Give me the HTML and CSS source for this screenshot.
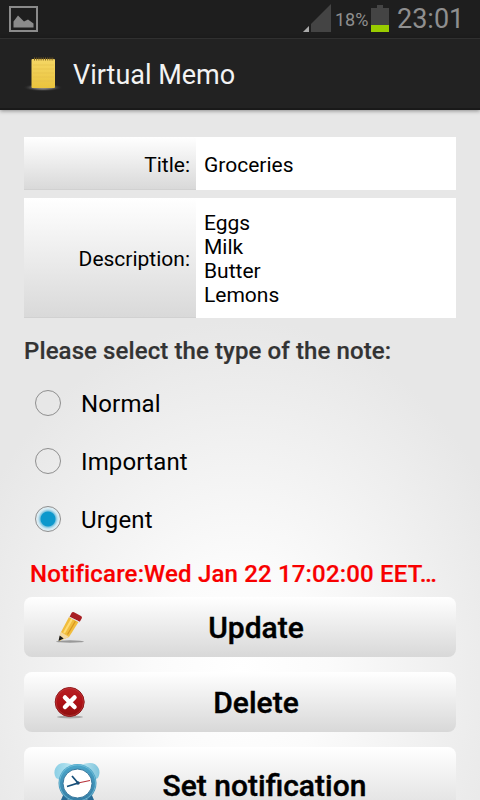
FILE: index.html
```html
<!DOCTYPE html>
<html lang="en">
<head>
<meta charset="utf-8">
<title>Virtual Memo</title>
<link rel="stylesheet" href="styles.css">
</head>
<body>
<div class="screen">
  <div class="status">
    <svg class="picture" width="30" height="27" viewBox="0 0 30 27"><path d="M1 1h27v24H1z" fill="none" stroke="#8b8b8b" stroke-width="2"/><path d="M4.500 21.500v-6l4.500-6 6 6 4-2 5.500 4v4z" fill="#8b8b8b"/></svg>
    <div class="status-right">
      <svg class="signal" width="29" height="28" viewBox="0 0 29 28"><path d="M0 28 28 0v28z" fill="#444"/><path d="M7 20v8" stroke="#1e1e1e" stroke-width="2"/><path d="M0 28l6-6v6z" fill="#aaa"/></svg>
      <span class="percent">18%</span>
      <svg class="battery" width="18" height="27" viewBox="0 0 18 27"><path d="M0 3h6V0h6v3h6v17H0z" fill="#444"/><path d="M0 20h18v7H0z" fill="#99cc00"/></svg>
      <span class="time">23:01</span>
    </div>
  </div>
  <header class="bar">
    <svg class="logo" width="48" height="48" viewBox="0 0 48 48">
      <defs>
        <linearGradient id="paper" x1="0" y1="0" x2="0" y2="1"><stop offset="0" stop-color="#f5d765"/><stop offset="1" stop-color="#eac43d"/></linearGradient>
        <radialGradient id="glow"><stop offset="0" stop-color="#aaa28b"/><stop offset=".5" stop-color="#666"/><stop offset="1" stop-color="#222" stop-opacity="0"/></radialGradient>
      </defs>
      <ellipse cx="24" cy="37.500" rx="20" ry="4" fill="url(#glow)"/>
      <rect x="12.500" y="9" width="23.500" height="29" rx="1" fill="url(#paper)"/>
      <path d="M14 15h21M14 19h21M14 23h21M14 27h21M14 31h21" stroke="#e4c04a" stroke-width=".6"/>
      <path d="M15 9h20" stroke="#7d6120" stroke-width="3" stroke-dasharray="1 1.200"/>
    </svg>
    <h1 class="title">Virtual Memo</h1>
  </header>
  <main class="content">
    <div class="field one"><div class="label"><span>Title:</span></div><div class="value"><span>Groceries</span></div></div>
    <div class="field four"><div class="label"><span>Description:</span></div><div class="value"><span>Eggs<br>Milk<br>Butter<br>Lemons</span></div></div>
    <div class="question"><span>Please select the type of the note:</span></div>
    <div class="radio"><i class="dot"></i><span class="normal">Normal</span></div>
    <div class="radio"><i class="dot"></i><span class="important">Important</span></div>
    <div class="radio"><i class="dot on"></i><span class="urgent">Urgent</span></div>
    <div class="notice"><span>Notificare:Wed Jan 22 17:02:00 EET…</span></div>
    <div class="button">
      <svg class="icon" width="48" height="40" viewBox="0 0 48 40">
        <ellipse cx="18" cy="31.500" rx="14" ry="1.200" fill="#999"/>
        <path d="M7 31l2-9L17 7l9.500 5L17 27z" fill="#f1bd3d"/>
        <path d="M12 23 20 9" stroke="#ffdc73" stroke-width="2"/><path d="M15.500 24.500 23.500 11" stroke="#d9951f" stroke-width="1.200"/>
        <path d="M6.500 31l2.500-9 8 5z" fill="#f5d9a0"/><path d="M6.500 31l1.200-5.500 4 3z" fill="#181818"/>
        <path d="M17.500 7l2-4q1-1.500 2.500-.8l7 3.800q1.500.8.800 2.300l-2 3.500z" fill="#a81f24"/><path d="M17.300 7l10 5" stroke="#ddd" stroke-width="1"/>
      </svg>
      <span class="update">Update</span>
    </div>
    <div class="button">
      <svg class="icon" width="48" height="40" viewBox="0 0 48 40">
        <defs><linearGradient id="red" x1="0" y1="0" x2="0" y2="1"><stop offset="0" stop-color="#b92024"/><stop offset=".5" stop-color="#ae1116"/><stop offset="1" stop-color="#8d1010"/></linearGradient></defs>
        <ellipse cx="18" cy="32" rx="13" ry="1.500" fill="#aaa"/>
        <circle cx="17.700" cy="17" r="14.500" fill="url(#red)" stroke="#8c1518"/><circle cx="17.700" cy="17" r="13.700" fill="none" stroke="#c94848" stroke-width=".5"/>
        <path d="M13 12.500 22.500 22M22.500 12.500 13 22" stroke="#fff" stroke-width="4.500" stroke-linecap="round"/>
      </svg>
      <span class="delete">Delete</span>
    </div>
    <div class="button last">
      <svg class="icon clock" width="52" height="50" viewBox="0 0 52 50">
        <defs><linearGradient id="ring" x1="0" y1="0" x2="0" y2="1"><stop offset="0" stop-color="#4ba7cb"/><stop offset="1" stop-color="#347ca4"/></linearGradient><linearGradient id="bell"><stop offset="0" stop-color="#8bcfe5"/><stop offset=".5" stop-color="#c8edf5"/><stop offset="1" stop-color="#7fc4dc"/></linearGradient></defs>
        <path d="M4 18C0 11 4 3 12 3c4 0 8 1 10 3L8 20zM46 18c4-7 0-15-8-15-4 0-8 1-10 3l14 14z" fill="url(#bell)"/>
        <path d="M14 36l-3 7M37 36l3 7" stroke="#286a94" stroke-width="6"/>
        <circle cx="25.500" cy="23" r="19" fill="url(#ring)"/><circle cx="25.500" cy="23" r="18" fill="none" stroke="#80c8e0" stroke-width=".7"/>
        <circle cx="25.500" cy="23.500" r="14.500" fill="#fff" stroke="#34759b"/>
        <path d="M15 26.500l11-3.500-6-7" fill="none" stroke="#174f79" stroke-width="1.800"/><path d="M26 23l12-2.500" stroke="#b73139" stroke-width="1.200"/><circle cx="26" cy="23" r="1.700" fill="#174f79"/>
      </svg>
      <span class="set">Set notification</span>
    </div>
  </main>
</div>
</body>
</html>
```
FILE: styles.css
```css
* { box-sizing: border-box; }
body { margin: 0; font-family: Roboto, "Liberation Sans", sans-serif; color: #000; }
.screen { width: 480px; height: 800px; overflow: hidden; background: radial-gradient(ellipse 290px 350px at 240px 670px, #fff 0, #fbfbfb 30%, #e7e7e7 100%); }
.status { height: 38px; background: #1e1e1e; display: flex; justify-content: space-between; padding: 6px 18px 0 9px; color: #8f8f8f; }
.status-right { display: flex; }
.signal { margin-top: -2px; margin-right: 3px; }
.percent { font-size: 18px; line-height: 28px; width: 32px; margin-right: 4px; white-space: nowrap; }
.battery { margin-top: -1px; margin-right: 8px; }
.time { font-size: 27px; line-height: 26px; width: 65px; white-space: nowrap; }
.bar { height: 72px; background: #222; border-top: 1px solid #303030; border-bottom: 2px solid #191919; display: flex; align-items: center; padding-left: 19px; box-shadow: 0 1px 4px rgba(0,0,0,.4); }
.title { margin: 2px 0 0 6px; font-size: 27px; font-weight: 400; color: #f3f3f3; }
.content { padding: 27px 24px 0; }
.field { display: flex; height: 53px; background: #fff; margin-bottom: 8px; font-size: 21px; }
.four { height: 120px; margin-bottom: 15px; }
.label { width: 172px; display: flex; align-items: center; justify-content: flex-end; padding: 3px 6px 0 0; background: linear-gradient(#fff, #d9d9d9); border-bottom: 1px solid #d1d1d1; }
.value { display: flex; align-items: center; padding: 2px 8px 0; line-height: 24px; }
.question { height: 41px; line-height: 36px; font-size: 24px; font-weight: 500; letter-spacing: .1px; color: #333; white-space: nowrap; -webkit-text-stroke: .2px #333; }
.radio { height: 58px; display: flex; align-items: center; font-size: 24px; padding-left: 11px; }
.radio span { padding-top: 2px; letter-spacing: .15px; }
.dot { width: 26px; height: 26px; border: 1.500px solid #8f8f8f; border-radius: 50%; margin-right: 20px; }
.on { background: radial-gradient(circle, #0d98cc 0 7px, #82c5df 8px, #d0e9f3 10px, #e2eef3 12px); }
.notice { height: 49px; line-height: 52px; padding-left: 6px; font-size: 24px; font-weight: 500; letter-spacing: .17px; color: #f80000; white-space: nowrap; -webkit-text-stroke: .2px #f80000; }
.button { height: 60px; margin-bottom: 15px; border-radius: 8px; display: grid; grid-template-columns: 28px minmax(0, 1fr) 28px; align-items: center; background: linear-gradient(#fff, #d8d8d8); font-size: 30px; font-weight: 500; -webkit-text-stroke: .4px #000; }
.button span { grid-area: 1 / 2; justify-self: center; padding-left: 32px; padding-top: 1px; white-space: nowrap; }
.icon { grid-area: 1 / 2; -webkit-text-stroke: 0; margin-top: 5px; }
.last { height: 80px; }
.last span { padding-left: 49px; padding-top: 0; margin-top: -4px; }
.clock { margin-top: -4px; }
```
